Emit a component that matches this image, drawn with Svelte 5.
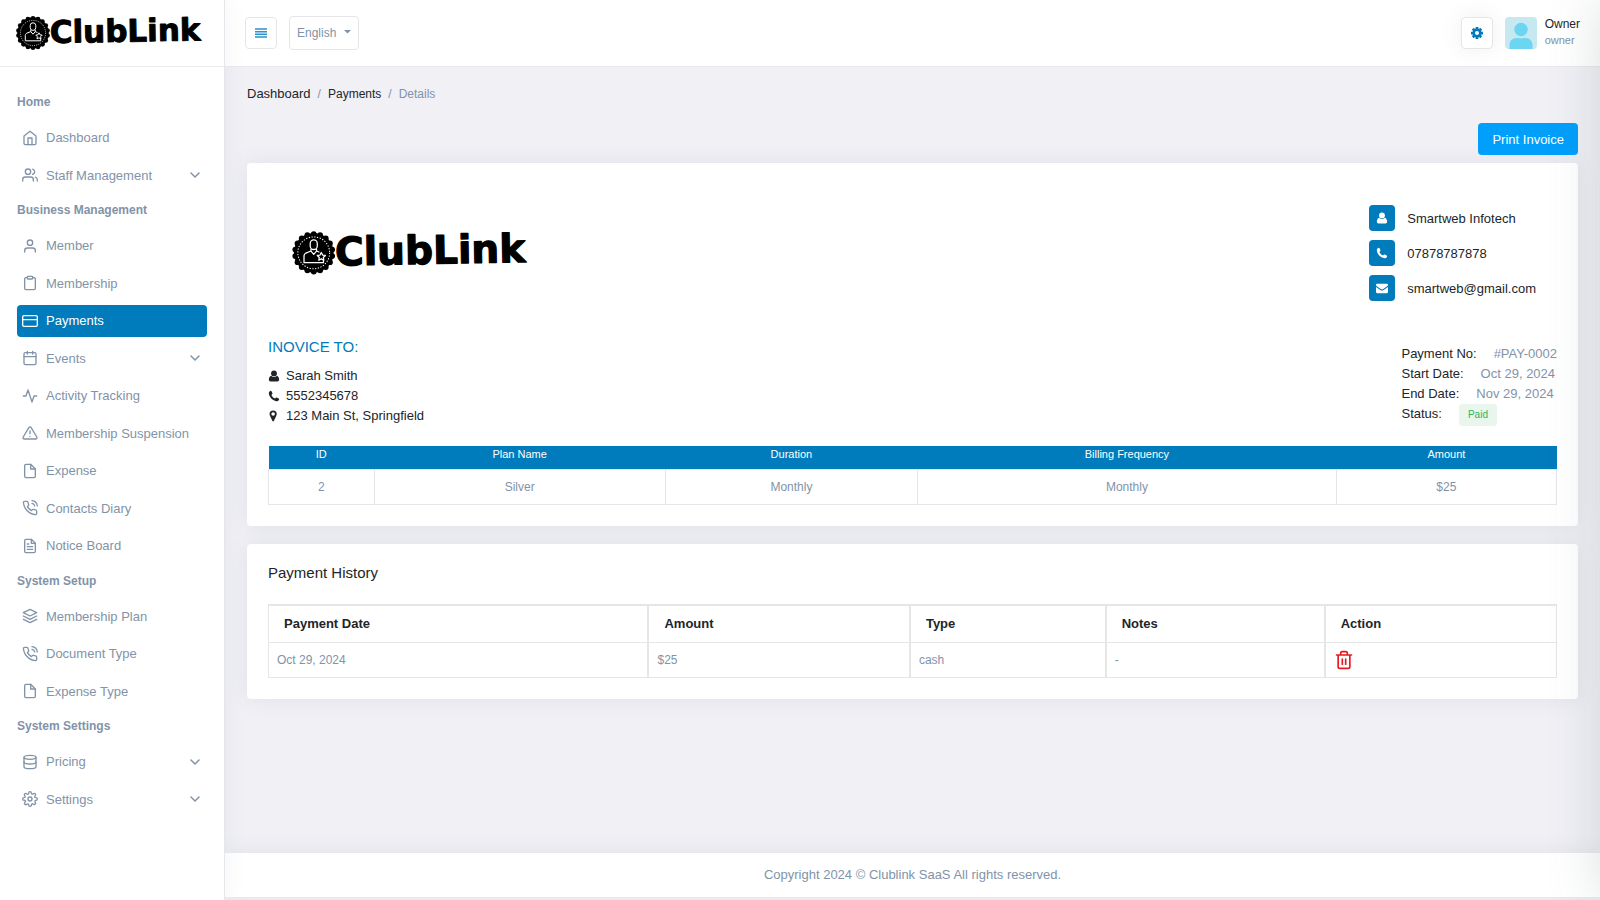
<script>
  const groups = [
    {
      label: 'Home',
      items: [
        { name: 'Dashboard', icon: 'home' },
        { name: 'Staff Management', icon: 'users', sub: true },
      ],
    },
    {
      label: 'Business Management',
      items: [
        { name: 'Member', icon: 'user' },
        { name: 'Membership', icon: 'clipboard' },
        { name: 'Payments', icon: 'card', active: true },
        { name: 'Events', icon: 'calendar', sub: true },
        { name: 'Activity Tracking', icon: 'activity' },
        { name: 'Membership Suspension', icon: 'alert' },
        { name: 'Expense', icon: 'file' },
        { name: 'Contacts Diary', icon: 'phone' },
        { name: 'Notice Board', icon: 'fileText' },
      ],
    },
    {
      label: 'System Setup',
      items: [
        { name: 'Membership Plan', icon: 'layers' },
        { name: 'Document Type', icon: 'phone' },
        { name: 'Expense Type', icon: 'file' },
      ],
    },
    {
      label: 'System Settings',
      items: [
        { name: 'Pricing', icon: 'database', sub: true },
        { name: 'Settings', icon: 'settings', sub: true },
      ],
    },
  ];

  // 24x24 outline icons
  const icons = {
    home: '<path d="M3 9l9-7 9 7v11a2 2 0 0 1-2 2H5a2 2 0 0 1-2-2z"/><path d="M9 22V12h6v10"/>',
    users: '<path d="M17 21v-2a4 4 0 0 0-4-4H5a4 4 0 0 0-4 4v2"/><circle cx="9" cy="7" r="4"/><path d="M23 21v-2a4 4 0 0 0-3-3.87M16 3.13a4 4 0 0 1 0 7.75"/>',
    user: '<path d="M20 21v-2a4 4 0 0 0-4-4H8a4 4 0 0 0-4 4v2"/><circle cx="12" cy="7" r="4"/>',
    clipboard: '<path d="M16 4h2a2 2 0 0 1 2 2v14a2 2 0 0 1-2 2H6a2 2 0 0 1-2-2V6a2 2 0 0 1 2-2h2"/><rect x="8" y="2" width="8" height="4" rx="1"/>',
    card: '<rect x="1" y="4" width="22" height="16" rx="2"/><path d="M1 10h22"/>',
    calendar: '<rect x="3" y="4" width="18" height="18" rx="2"/><path d="M16 2v4M8 2v4M3 10h18"/>',
    activity: '<path d="M22 12h-4l-3 9L9 3l-3 9H2"/>',
    alert: '<path d="M10.29 3.86L1.82 18a2 2 0 0 0 1.71 3h16.94a2 2 0 0 0 1.71-3L13.71 3.86a2 2 0 0 0-3.42 0z"/><path d="M12 9v4M12 17h.01"/>',
    file: '<path d="M13 2H6a2 2 0 0 0-2 2v16a2 2 0 0 0 2 2h12a2 2 0 0 0 2-2V9z"/><path d="M13 2v7h7"/>',
    fileText: '<path d="M14 2H6a2 2 0 0 0-2 2v16a2 2 0 0 0 2 2h12a2 2 0 0 0 2-2V8z"/><path d="M14 2v6h6M16 13H8M16 17H8M10 9H8"/>',
    phone: '<path d="M15.05 5A5 5 0 0 1 19 8.95M15.05 1A9 9 0 0 1 23 8.94m-1 7.98v3a2 2 0 0 1-2.18 2 19.79 19.79 0 0 1-8.63-3.07 19.5 19.5 0 0 1-6-6 19.79 19.79 0 0 1-3.07-8.67A2 2 0 0 1 4.11 2h3a2 2 0 0 1 2 1.72 12.84 12.84 0 0 0 .7 2.81 2 2 0 0 1-.45 2.11L8.09 9.91a16 16 0 0 0 6 6l1.27-1.27a2 2 0 0 1 2.11-.45 12.84 12.84 0 0 0 2.81.7A2 2 0 0 1 22 16.92z"/>',
    layers: '<path d="M12 2L2 7l10 5 10-5z"/><path d="M2 17l10 5 10-5M2 12l10 5 10-5"/>',
    database: '<ellipse cx="12" cy="5" rx="9" ry="3"/><path d="M21 12c0 1.66-4 3-9 3s-9-1.34-9-3"/><path d="M3 5v14c0 1.66 4 3 9 3s9-1.34 9-3V5"/>',
    settings: '<circle cx="12" cy="12" r="3"/><path d="M19.4 15a1.65 1.65 0 0 0 .33 1.82l.06.06a2 2 0 1 1-2.83 2.83l-.06-.06a1.65 1.65 0 0 0-2.8 1.18V21a2 2 0 0 1-4 0v-.09a1.65 1.65 0 0 0-2.9-1.1l-.06.06a2 2 0 1 1-2.83-2.83l.06-.06A1.65 1.65 0 0 0 3.1 14H3a2 2 0 0 1 0-4h.09a1.65 1.65 0 0 0 1.1-2.9l-.06-.06a2 2 0 1 1 2.83-2.83l.06.06A1.65 1.65 0 0 0 10 3.1V3a2 2 0 0 1 4 0v.09a1.65 1.65 0 0 0 2.9 1.1l.06-.06a2 2 0 1 1 2.83 2.83l-.06.06A1.65 1.65 0 0 0 20.9 10H21a2 2 0 0 1 0 4h-.09a1.65 1.65 0 0 0-1.51 1z"/>',
    trash: '<path d="M3 6h18M19 6v14a2 2 0 0 1-2 2H7a2 2 0 0 1-2-2V6m3 0V4a2 2 0 0 1 2-2h4a2 2 0 0 1 2 2v2M10 11v6M14 11v6"/>',
  };

  // 14x14 solid icons
  const solid = {
    user: '<circle cx="7" cy="4" r="3.4"/><path d="M3.6 6.6C2 7.2 1 9 1 11.2c0 1.4.8 2.3 2 2.3h8c1.2 0 2-.9 2-2.3 0-2.2-1-4-2.6-4.6a4.5 4.5 0 0 1-6.8 0z"/>',
    phone: '<path d="M1 3.3C1.2 2 2.3 1.2 3.3 1c.4 0 .6.2.8.6l1.1 2.2c.2.4.1.7-.2 1L4 5.7c.9 1.9 2.3 3.3 4.3 4.3l.9-1c.3-.3.6-.4 1-.2l2.2 1.1c.4.2.6.4.6.8-.2 1-1 2.1-2.3 2.3C6 13.3.7 8 1 3.3z"/>',
    mail: '<path d="M0 3.5C0 2.6.6 2 1.4 2h11.2c.8 0 1.4.6 1.4 1.5 0 .6-.5 1.2-1 1.6L8.5 8.2c-1 .7-2 .7-3 0L1 5.1C.5 4.7 0 4.1 0 3.5z"/><path d="M0 5.8l5 3.5c1.3.9 2.7.9 4 0l5-3.5v5.8c0 .8-.6 1.4-1.4 1.4H1.4C.6 13 0 12.4 0 11.6z"/>',
    pin: '<path fill-rule="evenodd" d="M6 .5a4.2 4.2 0 0 0-4.2 4.2c0 .8.2 1.3.4 1.8l3 6.4c.3.7 1.3.7 1.6 0l3-6.4c.2-.5.4-1 .4-1.8A4.2 4.2 0 0 0 6 .5zm0 2.1a2.1 2.1 0 1 1 0 4.2 2.1 2.1 0 0 1 0-4.2z"/>',
  };

  const company = [
    { icon: 'user', text: 'Smartweb Infotech' },
    { icon: 'phone', text: '07878787878' },
    { icon: 'mail', text: 'smartweb@gmail.com' },
  ];

  const customer = [
    { icon: 'user', text: 'Sarah Smith' },
    { icon: 'phone', text: '5552345678' },
    { icon: 'pin', text: '123 Main St, Springfield' },
  ];

  const summary = [
    ['Payment No:', '#PAY-0002'],
    ['Start Date:', 'Oct 29, 2024'],
    ['End Date:', 'Nov 29, 2024'],
  ];

  const scallops = Array.from({ length: 18 }, (_, i) => {
    const a = (i * Math.PI) / 9;
    return { x: 18 + 14.8 * Math.sin(a), y: 18 - 14.8 * Math.cos(a) };
  });
</script>

{#snippet icon(name, size)}
  <svg class="line-icon" width={size} height={size} viewBox="0 0 24 24" aria-hidden="true">{@html icons[name]}</svg>
{/snippet}

{#snippet glyph(name, size)}
  <svg width={size} height={size} viewBox="0 0 14 14" fill="currentColor" aria-hidden="true">{@html solid[name]}</svg>
{/snippet}

{#snippet logo()}
  <svg class="logo" viewBox="0 -4 190 44" role="img" aria-label="ClubLink">
    <circle cx="18" cy="18" r="15.7" />
    {#each scallops as s}
      <circle cx={s.x} cy={s.y} r="2.3" />
    {/each}
    <circle cx="18" cy="18" r="12.6" fill="none" stroke="#fff" stroke-width="0.8" stroke-dasharray="1 1.2" />
    <g fill="none" stroke="#fff" stroke-width="1" stroke-linejoin="round">
      <rect x="15.2" y="7.8" width="5.6" height="7.6" rx="2.8" />
      <path d="M15.8 15v1.7l2.2 2.5 2.2-2.5V15" />
      <path d="M15.8 16.6l-4 1.6c-1 .5-1.5 1.3-1.5 2.4v5.2h15.4v-2M20.2 16.6l2.3 1" />
      <path fill="#000" d="M24 17.8l1 2 2.2.3-1.6 1.6.4 2.2-2-1.1-2 1.1.4-2.2-1.6-1.6 2.2-.3z" />
    </g>
    <text x="35" y="28" transform="rotate(-1 35 28)">ClubLink</text>
  </svg>
{/snippet}

<div class="layout">
  <aside class="sidebar">
    <a class="brand" href="#home">{@render logo()}</a>
    <nav>
      {#each groups as group}
        <h2>{group.label}</h2>
        <ul>
          {#each group.items as item}
            <li>
              <a class="nav-link" class:active={item.active} href="#{item.name}">
                {@render icon(item.icon, 16)}
                <span>{item.name}</span>
                {#if item.sub}
                  <svg class="line-icon chevron" width="12" height="12" viewBox="0 0 24 24" aria-hidden="true"><path d="M4 8l8 8 8-8" /></svg>
                {/if}
              </a>
            </li>
          {/each}
        </ul>
      {/each}
    </nav>
  </aside>

  <div class="page">
    <header class="topbar">
      <button class="square" type="button" aria-label="Toggle menu">
        <svg width="12" height="10" viewBox="0 0 12 10" aria-hidden="true">
          <path d="M0 1h12M0 3.7h12M0 6.3h12M0 9h12" stroke="#2a93cd" stroke-width="1.6" />
        </svg>
      </button>
      <label class="language">
        <select aria-label="Language">
          <option>English</option>
        </select>
        <svg width="7" height="4" viewBox="0 0 7 4" aria-hidden="true"><path d="M0 0h7L3.5 3.5z" fill="#8293a8" /></svg>
      </label>
      <div class="account">
        <button class="square raised" type="button" aria-label="Settings">
          <svg width="12" height="12" viewBox="0 0 24 24" aria-hidden="true">
            <g stroke="#007bbb" stroke-width="5.5"><path d="M12 0v24M0 12h24M3.5 3.5l17 17M20.5 3.5l-17 17" /></g>
            <circle cx="12" cy="12" r="6.5" fill="#fff" stroke="#007bbb" stroke-width="5" />
          </svg>
        </button>
        <svg class="avatar" width="32" height="32" viewBox="0 0 32 32" role="img" aria-label="Owner">
          <rect width="32" height="32" fill="#c6e8f1" />
          <circle cx="16" cy="12.5" r="6.7" fill="#6bd5f2" />
          <path d="M4.5 32v-4c0-4 3-7 7-7h2c1.6.6 3.4.6 5 0h2c4 0 7 3 7 7v4z" fill="#6bd5f2" />
        </svg>
        <div class="who">
          <strong>Owner</strong>
          <span>owner</span>
        </div>
      </div>
    </header>

    <main>
      <nav class="breadcrumb" aria-label="Breadcrumb">
        <a class="root" href="#dashboard">Dashboard</a>
        <span>/</span>
        <a href="#payments">Payments</a>
        <span>/</span>
        <span>Details</span>
      </nav>

      <div class="actions">
        <button class="print" type="button">Print Invoice</button>
      </div>

      <section class="card invoice">
        <div class="invoice-head">
          {@render logo()}
          <ul class="company">
            {#each company as row}
              <li><span class="tile">{@render glyph(row.icon, 12)}</span>{row.text}</li>
            {/each}
          </ul>
        </div>

        <div class="parties">
          <div>
            <h3>INOVICE TO:</h3>
            <ul class="customer">
              {#each customer as row}
                <li>{@render glyph(row.icon, 12)}{row.text}</li>
              {/each}
            </ul>
          </div>
          <dl class="summary">
            {#each summary as [term, value]}
              <div><dt>{term}</dt><dd>{value}</dd></div>
            {/each}
            <div><dt>Status:</dt><dd class="badge">Paid</dd></div>
          </dl>
        </div>

        <table class="plan">
          <colgroup><col class="p-id" /><col class="p-name" /><col class="p-duration" /><col class="p-billing" /><col class="p-amount" /></colgroup>
          <thead>
            <tr><th>ID</th><th>Plan Name</th><th>Duration</th><th>Billing Frequency</th><th>Amount</th></tr>
          </thead>
          <tbody>
            <tr><td>2</td><td>Silver</td><td>Monthly</td><td>Monthly</td><td>$25</td></tr>
          </tbody>
        </table>
      </section>

      <section class="card history">
        <h3>Payment History</h3>
        <table>
          <colgroup><col class="h-date" /><col class="h-amount" /><col class="h-type" /><col class="h-notes" /><col class="h-action" /></colgroup>
          <thead>
            <tr><th>Payment Date</th><th>Amount</th><th>Type</th><th>Notes</th><th>Action</th></tr>
          </thead>
          <tbody>
            <tr>
              <td>Oct 29, 2024</td>
              <td>$25</td>
              <td>cash</td>
              <td>-</td>
              <td><button class="delete" type="button" aria-label="Delete">{@render icon('trash', 20)}</button></td>
            </tr>
          </tbody>
        </table>
      </section>
    </main>

    <footer>Copyright 2024 © Clublink SaaS All rights reserved.</footer>
  </div>
  <div class="drawer"></div>
</div>

<style>
  :global(body) {
    background: #f0f0f5;
    color: #212529;
    font-family: "Liberation Sans", Arial, sans-serif;
    font-size: 13px;
  }
  .layout, .layout * { box-sizing: border-box; }
  .layout { --muted: #8293a8; display: flex; min-height: 100vh; }
  ul, dl, dd, h2, h3 { margin: 0; padding: 0; list-style: none; }
  a { color: inherit; text-decoration: none; }
  button, select { font: inherit; cursor: pointer; }
  svg { display: block; flex-shrink: 0; }
  .line-icon {
    fill: none;
    stroke: currentColor;
    stroke-width: 2;
    stroke-linecap: round;
    stroke-linejoin: round;
  }
  .logo { overflow: visible; }
  .logo text {
    font-family: "DejaVu Sans", sans-serif;
    font-size: 31px;
    font-weight: 700;
    stroke: #000;
    stroke-width: 1px;
    stroke-linejoin: round;
  }

  /* Sidebar */
  .sidebar {
    width: 225px;
    flex-shrink: 0;
    background: #fff;
    border-right: 1px solid #e6e6ea;
    box-shadow: 0 0 21px rgba(89, 102, 122, 0.07);
    z-index: 1;
  }
  .brand {
    display: flex;
    align-items: center;
    height: 67px;
    padding: 0 15px;
    border-bottom: 1px solid #e9e9ed;
  }
  .brand .logo { width: 190px; }
  .sidebar nav { padding: 16px 17px; }
  h2 {
    margin: 11px 0 12px;
    color: var(--muted);
    font-size: 12px;
    line-height: 16px;
  }
  .sidebar ul { display: flex; flex-direction: column; gap: 6px; }
  .nav-link {
    display: flex;
    align-items: center;
    gap: 8px;
    padding: 6px 5px;
    border-radius: 4px;
    color: var(--muted);
    line-height: 1.5;
    white-space: nowrap;
  }
  .nav-link.active { background: #007bbb; color: #fff; }
  .chevron { margin: 0 1px 0 auto; stroke-width: 3; }

  /* Top bar */
  .page { flex: 1; min-width: 0; display: flex; flex-direction: column; }
  .topbar {
    display: flex;
    align-items: center;
    gap: 12px;
    height: 67px;
    padding: 0 20px;
    background: #fff;
    border-bottom: 1px solid #e9e9ed;
  }
  .square {
    display: grid;
    place-items: center;
    width: 32px;
    height: 32px;
    padding: 0;
    background: #fff;
    border: 1px solid #e6e6ea;
    border-radius: 4px;
  }
  .raised { box-shadow: 0 0 21px rgba(89, 102, 122, 0.1); }
  .language { position: relative; }
  .language select {
    appearance: none;
    width: 70px;
    height: 34px;
    padding: 0 7px;
    background: #fff;
    border: 1px solid #e6e6ea;
    border-radius: 4px;
    color: var(--muted);
    font-size: 12px;
  }
  .language svg { position: absolute; right: 8px; top: 14px; pointer-events: none; }
  .account { display: flex; align-items: center; gap: 12px; margin-left: auto; }
  .avatar { border-radius: 4px; }
  .who { display: flex; flex-direction: column; margin-left: -4px; padding-bottom: 3px; }
  .who strong { font-size: 12px; font-weight: 400; line-height: 18px; }
  .who span { font-size: 11px; line-height: 15px; color: var(--muted); }

  /* Content */
  main { flex: 1; padding: 18px 22px; }
  .breadcrumb {
    display: flex;
    align-items: center;
    gap: 7px;
    line-height: 18px;
    font-size: 12px;
    color: var(--muted);
  }
  .breadcrumb a { color: #212529; }
  .breadcrumb .root { font-size: 13px; }
  .actions { display: flex; justify-content: flex-end; margin: 20px 0 8px; }
  .print {
    height: 32px;
    padding: 0 14px;
    background: #009ffb;
    border: 0;
    border-radius: 4px;
    color: #fff;
  }
  .card {
    padding: 21px;
    background: #fff;
    border-radius: 4px;
    box-shadow: 0 0 21px rgba(89, 102, 122, 0.1);
  }
  .card + .card { margin-top: 18px; }
  h3 { font-size: 15px; font-weight: 400; line-height: 22px; }

  .invoice-head {
    display: flex;
    align-items: center;
    justify-content: space-between;
    padding: 21px 21px 21px 23px;
  }
  .invoice-head .logo { width: 240px; }
  .company { display: flex; flex-direction: column; gap: 9px; }
  .company li { display: flex; align-items: center; gap: 12px; }
  .tile {
    display: grid;
    place-items: center;
    width: 26px;
    height: 26px;
    background: #007bbb;
    border-radius: 4px;
    color: #fff;
  }
  .parties {
    display: flex;
    justify-content: space-between;
    align-items: flex-end;
    margin-bottom: 20px;
    padding-top: 14px;
  }
  .parties h3 { margin-bottom: 8px; color: #007bbb; }
  .customer li { display: flex; align-items: center; gap: 6px; line-height: 20px; }
  .summary { margin-bottom: 2px; }
  .summary div { display: flex; gap: 17px; height: 20px; line-height: 20px; }
  .summary dd { color: var(--muted); }
  .summary .badge {
    height: 22px;
    padding: 0 9px;
    background: #e9f6ee;
    border-radius: 3px;
    color: #2eb25a;
    font-size: 10px;
    line-height: 22px;
  }

  table { width: 100%; border-collapse: collapse; table-layout: fixed; }
  .plan { text-align: center; }
  .plan th {
    height: 23px;
    padding: 0 0 6px;
    background: #007bbb;
    color: #fff;
    font-size: 11px;
    font-weight: 400;
    line-height: 16px;
  }
  .plan td {
    height: 35px;
    padding: 0;
    border: 1px solid #e6e6ea;
    color: var(--muted);
    font-size: 12px;
  }
  .p-id { width: 8.2%; }
  .p-name { width: 22.6%; }
  .p-duration { width: 19.6%; }
  .p-billing { width: 32.5%; }
  .p-amount { width: 17.1%; }

  .history h3 { margin: -3px 0 20px; }
  .history table { text-align: left; }
  .history th {
    height: 38px;
    padding: 0 15px;
    border: solid #e6e6e6;
    border-width: 2px 2px 1px;
    font-size: 13px;
  }
  .history td {
    height: 35px;
    padding: 0 8px;
    border: solid #e6e6e6;
    border-width: 1px 2px;
    color: var(--muted);
    font-size: 12px;
  }
  .history tr > :first-child { border-left-width: 1px; }
  .history tr > :last-child { border-right-width: 1px; }
  .h-date { width: 29.5%; }
  .h-amount { width: 20.3%; }
  .h-type { width: 15.2%; }
  .h-notes { width: 17%; }
  .h-action { width: 18%; }
  .delete { display: block; padding: 0; background: none; border: 0; color: #e8191c; }

  footer {
    height: 44px;
    margin-bottom: 3px;
    background: #fff;
    box-shadow: 0 0 21px rgba(89, 102, 122, 0.1);
    color: var(--muted);
    line-height: 44px;
    text-align: center;
  }

  /* Closed drawer waits past the right edge, its shadow still shows */
  .drawer {
    position: fixed;
    top: 0;
    bottom: 0;
    left: 100%;
    width: 300px;
    box-shadow: 0 0 50px rgba(82, 100, 100, 0.2);
    z-index: 2;
  }
</style>
